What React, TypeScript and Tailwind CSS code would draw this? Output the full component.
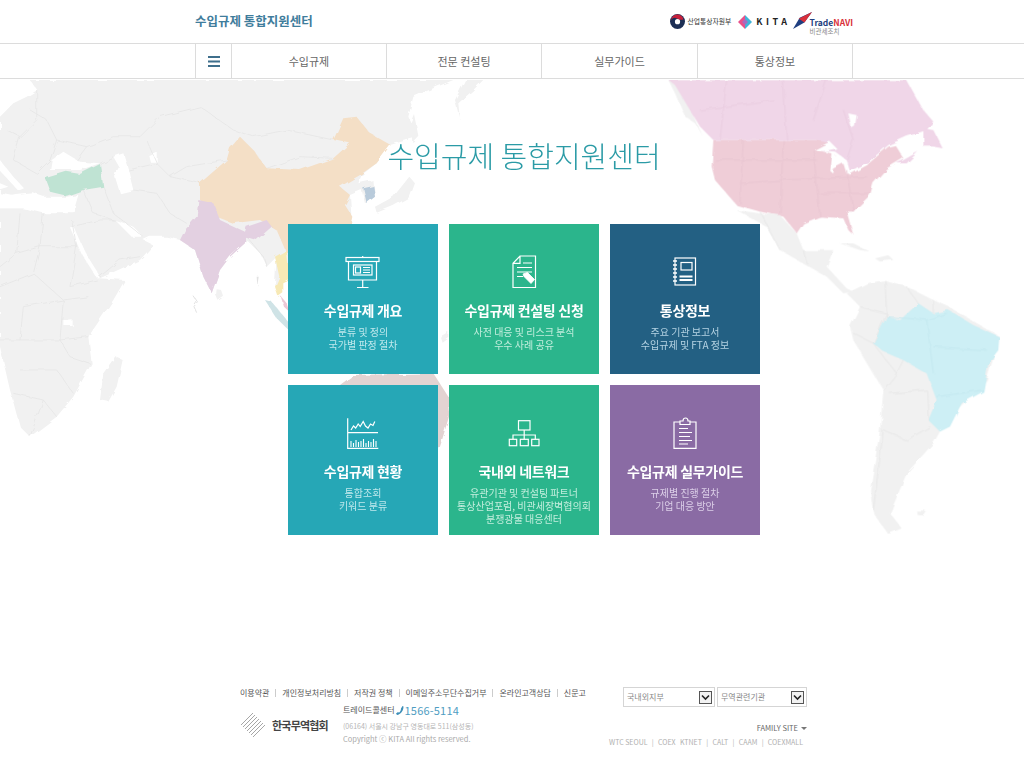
import React from 'react';

const LAND = '#f1f1f1';
const BORDER = '#e6e6e6';

// country borders traced from the map, left half
const asiaBorders = [
  '90,90 140,120 170,180 260,200 340,170 420,170 480,110 600,80 700,150 760,170',
  '110,30 110,120 60,170 20,150',
  '60,170 40,240 110,280 150,240',
  '170,180 150,240',
  '260,200 230,240',
  '300,250 340,230',
  '385,270 470,250 510,290 600,310',
  '400,330 470,340 510,400 560,430',
  '310,320 340,400 430,470',
  '250,330 280,400 340,420',
  '470,250 440,180',
  '510,290 560,260 680,240',
  '215,440 300,420 345,420',
  '300,590 360,540 420,530',
  '740,470 790,530 800,560',
  '1000,235 900,230 800,265',
  '760,170 860,150 1000,180',
];
const africaBorders = [
  '60,400 50,520 0,560',
  '130,400 120,500 50,520',
  '215,420 230,500 120,500',
  '120,500 100,580 190,660 265,650',
  '230,500 210,620 290,600',
  '100,580 0,620',
  '70,680 190,660',
  '70,680 60,780 0,780',
  '190,660 180,780 265,770',
  '60,780 180,780 210,830 270,850',
  '60,870 170,870 220,940',
  '40,940 130,960 90,1070',
  '130,960 170,1010',
];
const amBorders = [
  '660,680 740,700 700,790 640,760',
  '735,600 740,710',
  '800,620 835,670',
  '880,660 880,700',
  '700,790 770,880 730,930',
  '770,880 790,840',
  '750,940 860,930 865,1020',
  '730,1050 800,1080 870,1040',
  '730,1050 700,1290',
  '360,395 420,510',
  '490,510 500,550',
];
const caBorders = ['260,0 240,180', '430,0 440,180', '610,90 640,180 620,240', '180,90 400,60', '520,120 560,0'];
const usBorders = [
  '225,240 530,240',
  '310,180 300,370',
  '430,180 420,400',
  '520,210 540,410',
  '430,300 680,290',
  '300,310 430,300',
  '540,340 690,340',
  '620,270 640,395',
];
const bzBorders = ['740,710 860,720 920,700', '860,720 880,880', '880,800 1040,810', '890,950 1030,930'];

const WorldMap: React.FC = () => (
  <svg className="absolute inset-0" width="1024" height="769" viewBox="0 0 1024 769">
    <defs>
      <clipPath id="mapClip">
        <rect x="0" y="79" width="1024" height="690" />
      </clipPath>
      {/* roughens the straight polygon edges into something like a coastline */}
      <filter id="coast" x="0" y="0" width="100%" height="100%">
        <feTurbulence type="fractalNoise" baseFrequency="0.09" numOctaves="2" seed="4" />
        <feDisplacementMap in="SourceGraphic" scale="5" />
        <feGaussianBlur stdDeviation="0.35" />
      </filter>
    </defs>
    <g clipPath="url(#mapClip)">
      <g filter="url(#coast)">
        <g transform="translate(0,80) scale(0.33333)">
          {/* eurasia */}
          <polygon fill={LAND} points="0,110 40,70 80,50 112,30 90,0 1360,0 1300,25 1240,50 1225,110 1255,170 1170,195 1130,250 1085,285 1075,310 1120,300 1125,350 1095,370 1085,330 1050,345 1055,420 1000,470 860,560 835,640 825,610 830,530 800,560 780,520 740,480 690,530 660,570 635,640 610,590 585,510 540,480 500,470 450,470 430,480 460,495 420,540 300,595 240,490 210,430 200,380 0,340" />
          {/* africa */}
          <polygon fill={LAND} points="0,385 70,385 130,400 215,400 235,480 295,595 375,600 340,660 265,770 275,850 220,950 170,1010 90,1070 60,1040 30,930 0,800" />
          <polygon fill={LAND} points="300,960 310,880 345,830 368,840 350,920 325,965" />
          <polygon fill={LAND} points="650,628 665,630 672,650 655,662 648,645" />
          <polygon fill={LAND} points="1130,398 1125,380 1180,350 1228,290 1245,310 1230,350 1180,378" />
          <polygon fill={LAND} points="1245,105 1258,170 1240,190 1235,130" />
          <polygon fill={LAND} points="1380,120 1375,70 1420,30 1450,0 1395,0 1365,60" />
          <polygon fill={LAND} points="1320,770 1345,755 1345,770 1325,785" />
          {/* seas */}
          <polygon fill="#fff" points="0,355 50,345 100,340 130,350 200,350 235,345 220,397 130,395 70,385 0,385" />
          <polygon fill="#fff" points="0,240 40,290 72,325 55,332 0,272" />
          <polygon fill="#fff" points="0,310 25,320 0,328" />
          <polygon fill="#fff" points="155,240 190,215 240,245 300,250 240,270 200,270 150,270" />
          <polygon fill="#fff" points="340,230 370,220 385,270 400,330 360,340 345,290 360,265" />
          <polygon fill="#fff" points="445,225 470,215 470,245 450,245" />
          <polygon fill="#fff" points="345,420 395,470 430,470 400,440 370,428" />
          <polyline fill="none" stroke="#fff" strokeWidth="11" points="215,440 250,520 295,590" />
          <polygon fill="#fff" points="190,720 215,718 215,735 190,735" />
          {/* countries */}
          {asiaBorders.map((p, i) => (
            <polyline key={i} fill="none" stroke={BORDER} strokeWidth="2.5" points={p} />
          ))}
          {africaBorders.map((p, i) => (
            <polyline key={i} fill="none" stroke={BORDER} strokeWidth="2.5" points={p} />
          ))}
          <polygon fill="#bfe3d3" points="135,295 200,275 240,282 300,252 310,320 250,330 200,347 150,335" />
          <polygon fill="#f4dfc6" points="600,310 680,240 690,205 720,170 760,210 800,265 900,270 1000,235 1050,190 1000,180 1030,115 1070,110 1110,160 1172,195 1130,250 1080,285 1020,320 1050,345 1035,375 1057,410 1050,440 1000,480 860,520 830,450 780,420 700,430 650,410 600,360" />
          <polygon fill="#e3d0e1" points="595,360 640,370 660,420 735,455 740,440 800,420 815,440 770,480 735,470 735,490 690,530 660,570 635,640 610,590 585,510 540,480 555,450 590,410" />
          <polygon fill="#f7e9b5" points="825,530 860,510 870,600 850,610 850,640 835,650 825,620 838,590" />
          <polygon fill="#ecc8d6" points="842,648 860,670 868,695 852,680" />
          <polygon fill="#cfe3e6" points="795,660 815,665 868,730 868,752 830,715" />
          <polygon fill="#b9cbdb" points="1090,325 1120,318 1125,350 1100,370" />
          <polygon fill="#e3d3d2" points="1020,915 1060,885 1300,880 1345,950 1350,1000 1320,1100 1200,1140 1020,1140" />
          <polygon fill="#e2e2e2" points="770,590 776,590 772,618" />
          <polyline fill="none" stroke="#e2e2e2" strokeWidth="3" points="582,650 592,665 582,680 590,698" />
        </g>

        <g transform="translate(640,80) scale(0.33333)">
          <polygon fill={LAND} points="85,0 125,20 170,130 190,170 165,130 135,110 105,40" />
          <polygon fill="#f0d6e8" points="85,0 800,0 850,90 880,125 860,150 800,170 745,195 680,250 630,275 620,240 585,215 525,210 530,180 220,180 180,140 105,15" />
          <polygon fill="#f0d6e8" points="850,145 880,150 908,205 880,200 850,200" />
          <polygon fill="#f0d6e8" points="790,240 835,215 800,250 770,250" />
          <polygon fill="#fff" points="625,100 650,105 645,140 635,145" />
          <polygon fill="#efcdd7" points="220,180 530,180 570,190 530,210 585,222 570,270 610,250 620,282 680,255 745,200 765,195 790,235 740,265 700,310 690,345 640,395 620,395 640,465 625,450 610,415 540,410 490,430 470,460 430,410 360,395 290,375 225,300 215,260" />
          {/* great lakes */}
          <polygon fill="#fff" points="525,208 570,185 590,205 560,212 530,212" />
          <polygon fill="#fff" points="575,215 585,220 577,278 568,270" />
          <polygon fill="#fff" points="600,225 625,250 610,252" />
          <polygon fill="#fff" points="622,278 680,248 684,254 630,284" />
          <polygon fill={LAND} points="290,390 360,400 420,405 470,460 490,510 540,510 580,510 560,560 620,625 640,635 610,640 560,590 490,550 420,510 380,440" />
          <polygon fill={LAND} points="620,640 680,610 735,600 800,620 880,660 925,680 1080,770 1040,900 950,990 900,1055 880,1090 800,1180 750,1300 785,1345 745,1362 700,1300 690,1230 720,1050 730,930 640,780 630,740 660,680" />
          <polygon fill={LAND} points="600,490 640,490 690,515 660,510" />
          <polygon fill={LAND} points="705,535 745,525 760,540 720,545" />
          <polygon fill={LAND} points="828,1292 858,1292 850,1304 830,1302" />
          {amBorders.map((p, i) => (
            <polyline key={i} fill="none" stroke={BORDER} strokeWidth="2.5" points={p} />
          ))}
          <polygon fill="#cdeff5" points="835,670 880,700 925,690 1000,735 1078,770 1075,810 1045,850 1030,935 965,970 930,1040 900,1055 865,1020 890,960 860,880 790,840 730,815 700,790 740,710 780,720" />
          {caBorders.map((p, i) => (
            <polyline key={i} fill="none" stroke="#e9cce0" strokeWidth="2.5" points={p} />
          ))}
          {usBorders.map((p, i) => (
            <polyline key={i} fill="none" stroke="#e8c5d1" strokeWidth="2.5" points={p} />
          ))}
          {bzBorders.map((p, i) => (
            <polyline key={i} fill="none" stroke="#c3e8ef" strokeWidth="2.5" points={p} />
          ))}
        </g>
      </g>
    </g>
  </svg>
);

const iconProps = {
  width: 40,
  height: 40,
  viewBox: '0 0 40 40',
  fill: 'none',
  stroke: '#fff',
  strokeWidth: 1.2,
};

const BoardIcon = () => (
  <svg {...iconProps}>
    <rect x="3" y="5.5" width="33" height="4" />
    <path d="M19.7 4v1.5M5.5 9.5V28h28V9.5M19.7 28v7M14 35.5h11.5" />
    <rect x="10.5" y="13" width="18.5" height="10" />
    <rect x="12.5" y="15" width="5" height="6" />
    <path d="M20 15.5h7M20 18h7M20 20.5h7" />
  </svg>
);

const DocIcon = () => (
  <svg {...iconProps}>
    <path d="M16 4h15.500v31.500H9V11.300zM16 4v7.300H9" />
    <path d="M19 11h9M13 15.500h15M13 20h15M13 24.500h6" />
    <path d="M19 22l4.500-1.500 7 7-3.500 4-7-7z" fill="#fff" strokeWidth="0.800" />
  </svg>
);

const NoteIcon = () => (
  <svg {...iconProps}>
    <rect x="10" y="6" width="20.500" height="27" />
    <rect x="16" y="10.500" width="11" height="7.500" />
    <path d="M14.500 24.500h13M14.500 28h13" strokeWidth="1.800" />
    <path d="M8 9h4M8 13h4M8 17h4M8 21h4M8 25h4M8 29h4" strokeWidth="1.600" />
  </svg>
);

const ChartIcon = () => (
  <svg {...iconProps}>
    <path d="M4.700 5.300v30h30.600M4.700 19.700H35" />
    <path d="M8 17l2.500-4 2.200 2 2.500-4 2 2.500 3-5 2.300 4.500 2.500 2 2.500-4 2.500 1.500 1.800-4" />
    <path d="M8 34v-6M10.500 34v-4M13 34v-7M15.500 34v-5M18 34v-6M20.500 34v-8M23 34v-4M25.500 34v-6M28 34v-5M30.500 34v-8M33 34v-6" strokeWidth="1.100" />
  </svg>
);

const OrgIcon = () => (
  <svg {...iconProps}>
    <rect x="14.500" y="7.700" width="11.500" height="9.300" />
    <rect x="5.300" y="26.300" width="7.400" height="6.400" />
    <rect x="16.300" y="26.300" width="8" height="6.400" />
    <rect x="27.700" y="26.300" width="7.300" height="6.400" />
    <path d="M20.200 17v9.300M9 26.300V22h22.300v4.300" />
  </svg>
);

const ClipIcon = () => (
  <svg {...iconProps}>
    <path d="M15 9H9v26.300h22V9h-6" />
    <path d="M15 11.500V8h3c0-4 5-4 5 0h2v3.500z" />
    <path d="M14 15.500h9M14 19.500h13M14 23.500h11M14 27.500h13M14 31h9" />
  </svg>
);

interface CardInfo {
  title: string;
  lines: string[];
  bg: string;
  sub: string;
  icon: React.ReactNode;
}

const cards: CardInfo[] = [
  { title: '수입규제 개요', lines: ['분류 및 정의', '국가별 판정 절차'], bg: 'bg-[#26a7b6]', sub: 'text-[#bfe8ec]', icon: <BoardIcon /> },
  { title: '수입규제 컨설팅 신청', lines: ['사전 대응 및 리스크 분석', '우수 사례 공유'], bg: 'bg-[#2bb58c]', sub: 'text-[#c3eedd]', icon: <DocIcon /> },
  { title: '통상정보', lines: ['주요 기관 보고서', '수입규제 및 FTA 정보'], bg: 'bg-[#236083]', sub: 'text-[#b5d3e3]', icon: <NoteIcon /> },
  { title: '수입규제 현황', lines: ['통합조회', '키워드 분류'], bg: 'bg-[#26a7b6]', sub: 'text-[#bfe8ec]', icon: <ChartIcon /> },
  { title: '국내외 네트워크', lines: ['유관기관 및 컨설팅 파트너', '통상산업포럼, 비관세장벽협의회', '분쟁광물 대응센터'], bg: 'bg-[#2bb58c]', sub: 'text-[#c3eedd]', icon: <OrgIcon /> },
  { title: '수입규제 실무가이드', lines: ['규제별 진행 절차', '기업 대응 방안'], bg: 'bg-[#8a6ba4]', sub: 'text-[#dccfe8]', icon: <ClipIcon /> },
];

const Card: React.FC<{ card: CardInfo }> = ({ card }) => (
  <a className={`flex h-[150px] w-[150px] flex-col items-center pt-[28px] text-center ${card.bg}`}>
    {card.icon}
    <div className="mt-[7px] text-[14px] leading-[22px] font-bold tracking-[-0.3px] whitespace-nowrap text-white">{card.title}</div>
    <div className={`mt-[4px] text-[10px] leading-[13px] whitespace-nowrap ${card.sub}`}>
      {card.lines.map(l => (
        <div key={l}>{l}</div>
      ))}
    </div>
  </a>
);

const Chevron = () => (
  <span className="flex h-[13px] w-[13px] items-center justify-center border border-[#555] bg-[#f2f2f2]">
    <svg width="9" height="7" viewBox="0 0 9 7" fill="none" stroke="#222" strokeWidth="1.600">
      <path d="M1 1.500l3.500 3.500L8 1.500" />
    </svg>
  </span>
);

const SelectBox: React.FC<{ label: string; className: string }> = ({ label, className }) => (
  <div className={`flex h-[20px] items-center justify-between border border-[#d5d5d5] bg-white pr-[2px] pl-[3px] text-[8px] text-[#888] ${className}`}>
    <span>{label}</span>
    <Chevron />
  </div>
);

const navItems = [
  { label: '수입규제', w: 'w-[155px]' },
  { label: '전문 컨설팅', w: 'w-[155px]' },
  { label: '실무가이드', w: 'w-[156px]' },
  { label: '통상정보', w: 'w-[154px]' },
];

const footerLinks = ['이용약관', '개인정보처리방침', '저작권 정책', '이메일주소무단수집거부', '온라인고객상담', '신문고'];
const familyLinks = ['WTC SEOUL', 'COEX', 'KTNET', 'CALT', 'CAAM', 'COEXMALL'];

export default function App() {
  return (
    <div className="relative h-[769px] w-[1024px] overflow-hidden bg-white font-['Noto_Sans_CJK_KR',sans-serif]">
      <WorldMap />

      <header className="relative z-10 h-[44px] border-b border-[#dcdcdc] bg-white">
        <div className="flex h-[43px] w-[853px] items-center justify-between pl-[195px]">
          <div className="text-[12.500px] font-bold text-[#3f7d9c]">수입규제 통합지원센터</div>
          <div className="flex items-center">
            <svg width="15" height="15" viewBox="0 0 15 15">
              <circle cx="7.500" cy="7.500" r="7.500" fill="#1d2f55" />
              <path d="M1 6.500c1-3 4-3.500 6-2s4 1.500 6.500 1c-.5-3-3-5-6-5S1.500 2.500 1 6.500z" fill="#c8203c" />
              <circle cx="7.500" cy="7.700" r="2.600" fill="#fff" />
            </svg>
            <span className="ml-[3px] text-[6.800px] leading-none text-[#333]">산업통상자원부</span>
            <svg className="ml-[7px]" width="14" height="14" viewBox="0 0 14 14">
              <polygon points="7,0 14,7 7,14" fill="#3fb4d8" />
              <polygon points="7,0 0,7 7,14" fill="#e9508a" />
              <polygon points="7,4 10,7 7,10 4,7" fill="#a56cc0" />
            </svg>
            <span className="ml-[4px] text-[9px] leading-none font-bold tracking-[3.500px] text-[#222]">KITA</span>
            <svg className="ml-[3px]" width="19" height="19" viewBox="0 0 20 20">
              <polygon points="0,18 7,6 20,0 12,11" fill="#1f3f80" />
              <polygon points="6,7 20,0 12,11 9,9" fill="#d9303a" />
            </svg>
            <div className="-ml-[3px] flex flex-col pt-[10px]">
              <span className="text-[8.500px] leading-[10px] font-bold">
                <span className="text-[#1f3f80]">Trade</span>
                <span className="text-[#d9303a]">NAVI</span>
              </span>
              <span className="text-[6.500px] leading-[9px] text-[#888]">비관세조치</span>
            </div>
          </div>
        </div>
      </header>

      <nav className="relative z-10 h-[35px] border-b border-[#dcdcdc] bg-white">
        <div className="ml-[195px] flex h-[34px] w-[658px] border-x border-[#dcdcdc]">
          <div className="flex w-[36px] shrink-0 items-center justify-center border-r border-[#dcdcdc]">
            <svg width="12" height="11" viewBox="0 0 12 11" fill="#3f6f8c">
              <rect y="0" width="12" height="2" />
              <rect y="4.500" width="12" height="2" />
              <rect y="9" width="12" height="2" />
            </svg>
          </div>
          {navItems.map((item, i) => (
            <div
              key={item.label}
              className={`flex shrink-0 items-center justify-center text-[11px] text-[#666] ${item.w} ${i < navItems.length - 1 ? 'border-r border-[#dcdcdc]' : ''}`}
            >
              {item.label}
            </div>
          ))}
        </div>
      </nav>

      <main className="relative z-10 flex flex-col items-center pl-[24px]">
        <h1 className="mt-[56px] h-[40px] text-[29px] leading-[40px] font-light text-[#2b9ba6]">수입규제 통합지원센터</h1>
        <div className="mt-[49px] grid w-[472px] grid-cols-3 gap-[11px]">
          {cards.map(c => (
            <Card key={c.title} card={c} />
          ))}
        </div>
      </main>

      <footer className="relative z-10 mt-[151px] flex pl-[240px]">
        <div className="w-[346px]">
          <ul className="flex h-[14px] items-center justify-between text-[8px] leading-none text-[#555]">
            {footerLinks.map((l, i) => (
              <React.Fragment key={l}>
                {i > 0 && <li className="h-[8px] w-px bg-[#ccc]" />}
                <li>{l}</li>
              </React.Fragment>
            ))}
          </ul>
          <div className="mt-[3px] flex">
            <div className="flex w-[103px] items-center pt-[2px]">
              <svg width="26" height="26" viewBox="0 0 26 26" stroke="#8f8f8f" strokeWidth="0.800">
                <path d="M1 13L13 1M3 15L15 3M5 17L17 5M7 19L19 7M9 21L21 9M11 23L23 11M13 25L25 13" />
              </svg>
              <span className="ml-[6px] text-[11px] leading-none font-bold tracking-[-0.800px] whitespace-nowrap text-[#444]">한국무역협회</span>
            </div>
            <div>
              <div className="flex h-[14px] items-center text-[8px] whitespace-nowrap text-[#555]">
                트레이드콜센터
                <svg className="mx-[1px]" width="8" height="9" viewBox="0 0 8 9" fill="#3d8fb8">
                  <path d="M6.500 0l1 .5C7.500 5 4.500 8.500 1 9L0 7.500 2 6l1 .8C4.500 5.500 5 4 5 2.500z" />
                </svg>
                <span className="text-[11px] tracking-[0.200px] text-[#4f9dc2]">1566-5114</span>
              </div>
              <div className="mt-[4px] text-[7px] leading-[10px] whitespace-nowrap text-[#b5b5b5]">(06164) 서울시 강남구 영동대로 511(삼성동)</div>
              <div className="mt-[2px] text-[7.500px] leading-[12px] whitespace-nowrap text-[#aaa]">Copyright ⓒ KITA All rights reserved.</div>
            </div>
          </div>
        </div>
        <div className="ml-[37px] w-[184px] pt-[1px]">
          <div className="flex justify-between">
            <SelectBox label="국내외지부" className="w-[92px]" />
            <SelectBox label="무역관련기관" className="w-[90px]" />
          </div>
          <div className="mt-[16px] flex items-center justify-end text-[7.500px] leading-[10px] text-[#666]">
            FAMILY SITE
            <span className="ml-[3px] h-0 w-0 border-x-[3px] border-t-[3px] border-x-transparent border-t-[#777]" />
          </div>
          <div className="mt-[4px] -ml-[14px] flex w-[194px] justify-between text-[7px] leading-[10px] text-[#b0b0b0]">
            {familyLinks.map((l, i) => (
              <React.Fragment key={l}>
                {i > 0 && i !== 2 && <span>|</span>}
                <span>{l}</span>
              </React.Fragment>
            ))}
          </div>
        </div>
      </footer>
    </div>
  );
}
